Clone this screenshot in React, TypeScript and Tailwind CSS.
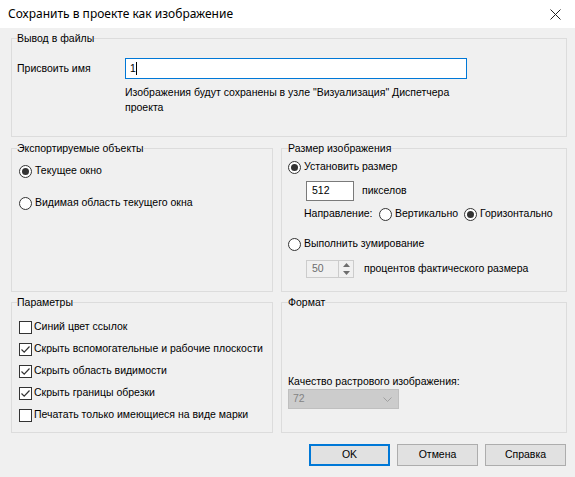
import React from "react";

function Radio({ checked, label }: { checked?: boolean; label: string }) {
  return (
    <div className="flex items-center h-[16px] gap-[3px]">
      <span className="w-[13px] h-[13px] rounded-full border border-[#333333] bg-white flex items-center justify-center shrink-0">
        {checked && <span className="w-[7px] h-[7px] rounded-full bg-[#333333]" />}
      </span>
      <span className="whitespace-nowrap">{label}</span>
    </div>
  );
}

function Check({ checked, label }: { checked?: boolean; label: string }) {
  return (
    <div className="flex items-center h-[22px] gap-[2px]">
      <span className="w-[13px] h-[13px] border border-[#333333] bg-white flex items-center justify-center shrink-0">
        {checked && (
          <svg width="11" height="11" viewBox="0 0 11 11">
            <path d="M1.5 5.5 L4.2 8.2 L9.5 2.5" fill="none" stroke="#333333" strokeWidth="1.2" />
          </svg>
        )}
      </span>
      <span className="whitespace-nowrap">{label}</span>
    </div>
  );
}

function Group({ title, className, children }: { title: string; className?: string; children?: React.ReactNode }) {
  return (
    <fieldset className={"border border-[#dcdcdc] px-[5px] min-w-0 " + (className ?? "")}>
      <legend className="leading-[16px] h-[16px] px-0 whitespace-nowrap">{title}</legend>
      {children}
    </fieldset>
  );
}

function Button({ label, primary }: { label: string; primary?: boolean }) {
  return (
    <div
      className={
        "w-[81px] h-[22px] flex items-center justify-center bg-[#e1e1e1] " +
        (primary ? "border-2 border-[#0078d7]" : "border border-[#adadad]")
      }
    >
      {label}
    </div>
  );
}

export default function App() {
  return (
    <div className="w-[575px] h-[477px] bg-[#f0f0f0] text-[10.5px] text-black font-['Liberation_Sans','Arial',sans-serif] overflow-hidden">
      {/* Title bar */}
      <div className="h-[28px] bg-white flex items-center justify-between pl-[8px] pr-[14px] text-[12px] font-['Noto_Sans',sans-serif]">
        <span>Сохранить в проекте как изображение</span>
        <svg width="11" height="11" viewBox="0 0 11 11">
          <path d="M0.5 0.5 L10.5 10.5 M10.5 0.5 L0.5 10.5" stroke="#222" strokeWidth="1" />
        </svg>
      </div>

      <div className="pl-[11px] pr-[8px] pt-[2px]">
        {/* Вывод в файлы */}
        <Group title="Вывод в файлы" className="pb-[21px]">
          <div className="flex items-center mt-[12px]">
            <span className="w-[108px] shrink-0">Присвоить имя</span>
            <div className="w-[342px] h-[21px] border border-[#0078d7] bg-white flex items-center pl-[4px]">
              <span>1</span>
              <span className="w-px h-[13px] bg-black" />
            </div>
          </div>
          <div className="ml-[108px] mt-[6px] leading-[15px] w-[325px]">
            Изображения будут сохранены в узле "Визуализация" Диспетчера проекта
          </div>
        </Group>

        {/* Middle row */}
        <div className="flex gap-[8px] mt-[3px]">
          <Group title="Экспортируемые объекты" className="w-[262px] h-[152px]">
            <div className="pl-[2px] mt-[7px] flex flex-col gap-[16px]">
              <Radio checked label="Текущее окно" />
              <Radio label="Видимая область текущего окна" />
            </div>
          </Group>
          <Group title="Размер изображения" className="w-[286px] h-[152px] !px-[6px]">
            <div className="mt-[3px]">
              <Radio checked label="Установить размер" />
            </div>
            <div className="flex items-center mt-[6px] ml-[18px]">
              <div className="w-[48px] h-[20px] border border-[#7a7a7a] bg-white flex items-center pl-[5px]">512</div>
              <span className="ml-[8px]">пикселов</span>
            </div>
            <div className="flex items-center mt-[5px] ml-[16px]">
              <span className="w-[75px]">Направление:</span>
              <div className="w-[85px]">
                <Radio label="Вертикально" />
              </div>
              <Radio checked label="Горизонтально" />
            </div>
            <div className="mt-[14px]">
              <Radio label="Выполнить зумирование" />
            </div>
            <div className="flex items-center mt-[8px] ml-[18px]">
              <div className="w-[48px] h-[18px] border border-[#cccccc] bg-[#f0f0f0] flex items-center">
                <span className="flex-1 pl-[5px] text-[#6d6d6d]">50</span>
                <div className="w-[15px] h-full flex flex-col border-l border-[#cccccc]">
                  <div className="flex-1 flex items-center justify-center">
                    <svg width="7" height="4" viewBox="0 0 7 4">
                      <path d="M0 4 L3.5 0 L7 4 Z" fill="#6d6d6d" />
                    </svg>
                  </div>
                  <div className="flex-1 flex items-center justify-center">
                    <svg width="7" height="4" viewBox="0 0 7 4">
                      <path d="M0 0 L3.5 4 L7 0 Z" fill="#6d6d6d" />
                    </svg>
                  </div>
                </div>
              </div>
              <span className="ml-[10px] whitespace-nowrap">процентов фактического размера</span>
            </div>
          </Group>
        </div>

        {/* Bottom row */}
        <div className="flex gap-[8px] mt-[2px]">
          <Group title="Параметры" className="w-[262px] h-[139px]">
            <div className="pl-[2px] mt-[6px] flex flex-col">
              <Check label="Синий цвет ссылок" />
              <Check checked label="Скрыть вспомогательные и рабочие плоскости" />
              <Check checked label="Скрыть область видимости" />
              <Check checked label="Скрыть границы обрезки" />
              <Check label="Печатать только имеющиеся на виде марки" />
            </div>
          </Group>
          <Group title="Формат" className="w-[286px] h-[139px] !px-[6px] flex flex-col">
            <div className="h-[99px] flex flex-col justify-end">
              <div className="leading-[16px]">Качество растрового изображения:</div>
              <div className="w-[111px] h-[20px] bg-[#cccccc] border border-[#bfbfbf] flex items-center justify-between pl-[4px] pr-[6px]">
                <span className="text-[#838383]">72</span>
                <svg width="9" height="5" viewBox="0 0 9 5">
                  <path d="M0.5 0.5 L4.5 4.5 L8.5 0.5" fill="none" stroke="#a0a0a0" strokeWidth="1" />
                </svg>
              </div>
            </div>
          </Group>
        </div>

        {/* Buttons */}
        <div className="flex justify-end gap-[7px] mt-[11px] pr-[1px]">
          <Button primary label="OK" />
          <Button label="Отмена" />
          <Button label="Справка" />
        </div>
      </div>
    </div>
  );
}
